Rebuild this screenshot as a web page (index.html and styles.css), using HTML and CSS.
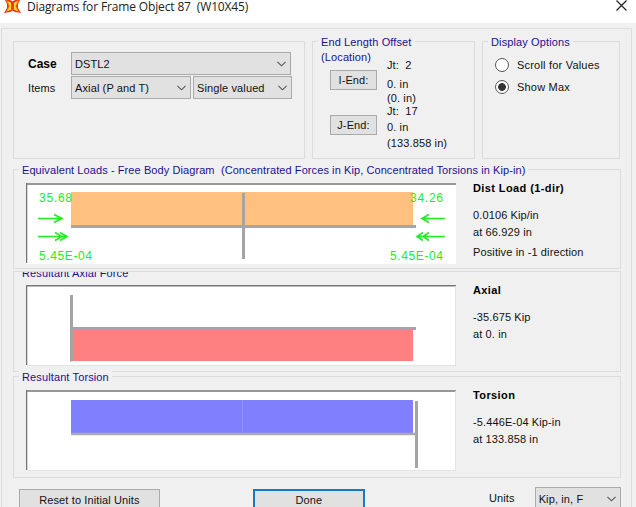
FILE: index.html
```html
<!DOCTYPE html>
<html lang="en">

<head>
    <meta charset="UTF-8">
    <meta name="viewport" content="width=device-width, initial-scale=1.0">
    <title>Diagrams for Frame Object 87 (W10X45)</title>
    <link rel="stylesheet" href="styles.css">
</head>

<body>
    <header class="title-bar">
        <svg class="app-icon" width="17" height="14" viewBox="0 0 17 14">
            <path d="M1 0H6L8.500 1.500L11 0H16L14 4V8L17 13L11 12L8.500 10.500L6 12L0 13L3 8V4Z" fill="#f52a12"/>
            <path d="M2 0L8.500 3.500L15 0L12 6L15 12L8.500 9L2 12L5 6Z" fill="#ffa01c"/>
            <path d="M4 1L8.500 4L13 1L11 6L13 11L8.500 8.500L4 11L6 6Z" fill="#ffe52b"/>
            <path d="M7 3H10V9H7Z" fill="#f33a18"/>
        </svg>
        <h1>Diagrams for Frame Object 87&nbsp; (W10X45)</h1>
        <svg class="close" width="11" height="11" viewBox="0 0 11 11">
            <path d="M.5 .5L10.500 10.500M10.500 .5L.5 10.500" stroke="#222" stroke-width="1.200"/>
        </svg>
    </header>

    <main class="dialog">
        <div class="options">
            <section class="group case-group">
                <div class="field">
                    <label class="bold">Case</label>
                    <div class="select wide"><span>DSTL2</span><svg class="arrow" viewBox="0 0 10 6"><path d="M.5 .7L5 5L9.500 .7"/></svg></div>
                </div>
                <div class="field">
                    <label>Items</label>
                    <div class="select items"><span>Axial (P and T)</span><svg class="arrow" viewBox="0 0 10 6"><path d="M.5 .7L5 5L9.500 .7"/></svg></div>
                    <div class="select valued"><span>Single valued</span><svg class="arrow" viewBox="0 0 10 6"><path d="M.5 .7L5 5L9.500 .7"/></svg></div>
                </div>
            </section>

            <section class="group offset-group">
                <h2>End Length Offset</h2>
                <div class="offset-body">
                    <div class="ends">
                        <h3>(Location)</h3>
                        <button>I-End:</button>
                        <button>J-End:</button>
                    </div>
                    <div class="joints">
                        <p>Jt:&nbsp; 2</p>
                        <p class="distance">0. in</p>
                        <p class="location">(0. in)</p>
                        <p class="joint">Jt:&nbsp; 17</p>
                        <p class="distance-j">0. in</p>
                        <p class="location-j">(133.858 in)</p>
                    </div>
                </div>
            </section>

            <section class="group display-group">
                <h2>Display Options</h2>
                <div class="radio"><i></i><span>Scroll for Values</span></div>
                <div class="radio checked"><i></i><span>Show Max</span></div>
            </section>
        </div>

        <section class="group diagram loads">
            <h2>Equivalent Loads - Free Body Diagram&nbsp; (Concentrated Forces in Kip, Concentrated Torsions in Kip-in)</h2>
            <div class="diagram-body">
                <svg class="plot" width="430" height="81" viewBox="0 0 430 81">
                    <rect width="430" height="81" fill="#fff"/>
                    <rect x="45" y="9" width="342" height="33" fill="#ffc080"/>
                    <path d="M45 43.500H390M217.500 10V76" stroke="#a5a5a5" stroke-width="3"/>
                    <path d="M0 1H430M.5 0V80" stroke="#777" stroke-width="1.600"/>
                    <g class="force" fill="none">
                        <path d="M12 35.500H36M28 31.500L36 35.500L28 39.500"/>
                        <path d="M12 53.500H41M29 49.500L36 53.500L29 57.500M34 49.500L41 53.500L34 57.500"/>
                        <path d="M419 35.500H396M403 31.500L396 35.500L403 39.500"/>
                        <path d="M419 53.500H391M397 49.500L391 53.500L397 57.500M403 49.500L397 53.500L403 57.500"/>
                    </g>
                    <g class="value">
                        <text x="13" y="19" textLength="33">35.68</text>
                        <text x="13" y="77" textLength="53">5.45E-04</text>
                        <text x="384" y="19" textLength="33">34.26</text>
                        <text x="364" y="77" textLength="53">5.45E-04</text>
                    </g>
                </svg>
                <div class="reading">
                    <h4>Dist Load (1-dir)</h4>
                    <p>0.0106 Kip/in</p>
                    <p>at 66.929 in</p>
                    <p class="direction">Positive in -1 direction</p>
                </div>
            </div>
        </section>

        <section class="group diagram axial">
            <h2>Resultant Axial Force</h2>
            <div class="diagram-body">
                <svg class="plot" width="430" height="81" viewBox="0 0 430 81">
                    <rect width="430" height="81" fill="#fff"/>
                    <rect x="46" y="45" width="341" height="31" fill="#ff8080"/>
                    <path d="M44 43.500H390M45.500 10V76.500" stroke="#a5a5a5" stroke-width="3"/>
                    <path d="M0 .7H430M.5 0V80" stroke="#777" stroke-width="1.600"/>
                    <path d="M1 80.500H430M429.500 1V80" stroke="#e3e3e3"/>
                </svg>
                <div class="reading">
                    <h4>Axial</h4>
                    <p>-35.675 Kip</p>
                    <p>at 0. in</p>
                </div>
            </div>
        </section>

        <section class="group diagram torsion">
            <h2>Resultant Torsion</h2>
            <div class="diagram-body">
                <svg class="plot" width="430" height="81" viewBox="0 0 430 81">
                    <rect width="430" height="81" fill="#fff"/>
                    <rect x="45" y="10" width="342" height="33" fill="#8080ff"/>
                    <path d="M216.500 10V43" stroke="#9292ff"/>
                    <path d="M45 44H390" stroke="#aaa" stroke-width="2.500"/>
                    <path d="M390.500 11V78" stroke="#a5a5a5" stroke-width="3"/>
                    <path d="M0 1H430M.5 0V80" stroke="#777" stroke-width="1.600"/>
                    <path d="M1 80.500H430M429.500 1V80" stroke="#e3e3e3"/>
                </svg>
                <div class="reading">
                    <h4>Torsion</h4>
                    <p>-5.446E-04 Kip-in</p>
                    <p>at 133.858 in</p>
                </div>
            </div>
        </section>

        <footer class="actions">
            <button class="reset">Reset to Initial Units</button>
            <button class="done">Done</button>
            <label>Units</label>
            <div class="select units"><span>Kip, in, F</span><svg class="arrow" viewBox="0 0 10 6"><path d="M.5 .7L5 5L9.500 .7"/></svg></div>
        </footer>
    </main>
</body>

</html>
```

FILE: styles.css
```css
* {
    box-sizing: border-box;
}

body {
    margin: 0;
    width: 636px;
    height: 507px;
    overflow: hidden;
    background-color: #f0f0f0;
    color: #111;
    font-family: "Liberation Sans", Arial, sans-serif;
    font-size: 11px;
    line-height: 14px;
    letter-spacing: 0.12px;
    white-space: nowrap;
}

h1,
h2,
h3,
h4,
p {
    margin: 0;
    font-size: inherit;
    font-weight: normal;
}

svg {
    display: block;
    flex: none;
}

/* Title bar */
.title-bar {
    display: flex;
    height: 23px;
    padding-left: 4px;
    background-color: #fff;
}

.title-bar h1 {
    margin-left: 6px;
    font-family: "Open Sans", sans-serif;
    font-size: 12px;
    line-height: 14px;
    letter-spacing: -0.14px;
    color: #222;
}

.close {
    margin-left: auto;
    margin-right: 9px;
}

.dialog {
    width: 631px;
    height: 500px;
    margin: 5px 0 0 1px;
    padding: 12px 10px 0 11px;
    border: 1px solid #dedede;
}

.group {
    border: 1px solid #dcdcdc;
}

.group h2,
.group h3 {
    color: #1b108f;
}

.group h2 {
    width: max-content;
    height: 14px;
    margin-top: -7px;
    padding: 0 3px;
    background-color: #f0f0f0;
}

/* Top row */
.options {
    display: grid;
    grid-template-columns: 292px 163px 138px;
    gap: 7px;
    height: 118px;
}

.case-group {
    padding: 10px 0 0 14px;
}

.field {
    display: flex;
    align-items: center;
    height: 23px;
    margin-bottom: 1px;
}

.field label {
    width: 43px;
}

.field .bold {
    font-size: 12px;
    font-weight: bold;
    letter-spacing: 0;
    color: #000;
}

.select {
    display: flex;
    align-items: center;
    justify-content: space-between;
    height: 23px;
    padding: 0 4px 0 3px;
    border: 1px solid #aaa;
    background-color: #e1e1e1;
}

.arrow {
    width: 9px;
    height: 6px;
    fill: none;
    stroke: #555;
    stroke-width: 1.2;
}

.wide {
    width: 220px;
}

.items {
    width: 120px;
    margin-right: 2px;
}

.valued {
    width: 99px;
}

.offset-group {
    padding-left: 5px;
}

.offset-body {
    display: flex;
    padding-left: 3px;
}

.ends {
    width: 66px;
    padding-top: 1px;
}

button {
    display: block;
    padding: 0;
    border: 1px solid #aaa;
    background-color: #e1e1e1;
    color: #111;
    font: inherit;
    letter-spacing: inherit;
}

.ends button {
    width: 47px;
    height: 20px;
    margin: 6px 0 0 9px;
}

.ends button + button {
    margin-top: 25px;
}

.joints {
    padding-top: 9px;
}

.distance {
    margin-top: 5px;
}

.joint {
    margin-top: -1px;
}

.distance-j {
    margin-top: 2px;
}

.location-j {
    margin-top: 2px;
}

.display-group {
    padding-left: 5px;
}

.radio {
    display: flex;
    align-items: center;
    height: 22px;
    padding-left: 7px;
}

.radio span {
    letter-spacing: 0.2px;
}

.display-group h2 {
    margin-bottom: 5px;
}

.radio i {
    width: 14px;
    height: 14px;
    margin-right: 8px;
    border: 1px solid #555;
    border-radius: 50%;
    background-color: #fff;
}

.checked i {
    background: radial-gradient(circle, #333 3.5px, #fff 4.2px);
}

/* Diagrams */
.diagram {
    width: 608px;
    padding-left: 5px;
}

.diagram-body {
    display: flex;
    padding-left: 7px;
}

.loads {
    height: 100px;
    margin-top: 10px;
}

.loads h2 {
    letter-spacing: 0.085px;
}

.axial {
    height: 101px;
    margin-top: 2px;
}

.axial h2 {
    height: 8px;
    margin-top: 0;
    line-height: 2px;
    overflow: hidden;
}

.axial .diagram-body {
    padding-top: 5px;
}

.torsion {
    height: 102px;
    margin-top: 4px;
}

.loads .diagram-body,
.torsion .diagram-body {
    padding-top: 6px;
}

.reading {
    margin-top: -2px;
    padding-left: 17px;
}

.reading h4 {
    margin-bottom: 12px;
    color: #000;
    font-weight: bold;
    letter-spacing: 0.4px;
}

.reading p {
    line-height: 17px;
}

.reading .direction {
    margin-top: 3px;
}

.force {
    stroke: #20ee20;
    stroke-width: 1.6;
}

.value {
    fill: #20ee20;
    font-size: 12px;
    letter-spacing: 0;
}

/* Bottom buttons */
.actions {
    display: flex;
    align-items: flex-start;
    padding: 9px 0 0 6px;
}

.actions button {
    height: 22px;
    margin-top: 2px;
}

.reset {
    width: 142px;
}

.done {
    width: 113px;
    margin-left: 93px;
}

.actions .done {
    border: 2px solid #1879c4;
}

.actions label {
    width: 46px;
    margin: 4px 0 0 124px;
}

.units {
    width: 87px;
}
```
